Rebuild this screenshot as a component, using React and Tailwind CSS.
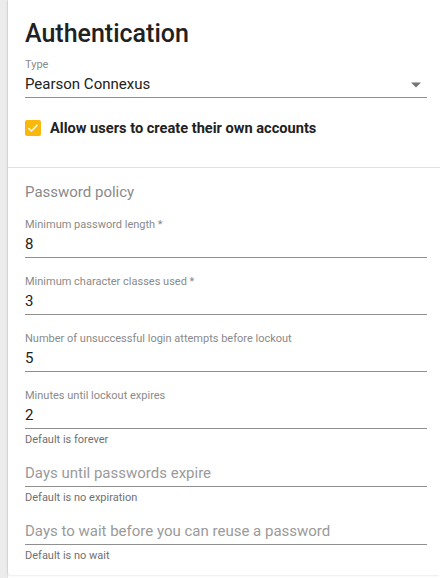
import React from "react";

function Field({ label, value, placeholder, helper, first }) {
  return (
    <div className={first ? "mt-[16px]" : ""}>
      {label && (
        <div className="text-[11px] leading-[14px] text-[#8a8a8a]">{label}</div>
      )}
      <div
        className={
          (label ? "mt-[2px] " : "mt-[16px] ") +
          "h-[24px] border-b border-[#8f8f8f] text-[15px] leading-[20px]"
        }
      >
        {value ? (
          <span className="text-[#212121]">{value}</span>
        ) : (
          <span className="text-[#9a9a9a]">{placeholder}</span>
        )}
      </div>
      {helper && (
        <div className="mt-[4px] text-[11px] leading-[14px] text-[#707070]">{helper}</div>
      )}
    </div>
  );
}

export default function App() {
  return (
    <div
      className="flex h-[578px] w-[440px] bg-white"
      style={{ fontFamily: "Roboto, 'Noto Sans', sans-serif" }}
    >
      <div className="w-[8px] shrink-0 bg-[#ececec] border-r border-[#e2e2e2]" />
      <div className="flex h-[575px] flex-1 flex-col rounded-bl-[4px] bg-white shadow-[-1px_1px_2px_rgba(0,0,0,0.08)]">
        <div className="pl-[17px] pr-[13px] pt-[18px]">
          <h1 className="text-[25px] font-medium leading-[32px] text-[#212121]">
            Authentication
          </h1>
          <div className="mt-[8px] text-[11px] leading-[14px] text-[#8a8a8a]">Type</div>
          <div className="mt-[2px] flex h-[24px] items-start justify-between border-b border-[#8f8f8f]">
            <span className="text-[15px] leading-[20px] text-[#212121]">Pearson Connexus</span>
            <svg width="10" height="6" viewBox="0 0 10 5" className="mr-[6px] mt-[8px]">
              <path d="M0 0 L10 0 L5 5 Z" fill="#757575" />
            </svg>
          </div>
          <div className="mt-[22px] flex items-center gap-[9px]">
            <div className="flex h-[16px] w-[16px] items-center justify-center rounded-[2px] bg-[#f8b90c]">
              <svg width="12" height="10" viewBox="0 0 12 10">
                <path
                  d="M1.5 5.2 L4.5 8 L10.5 1.8"
                  fill="none"
                  stroke="white"
                  strokeWidth="1.4"
                />
              </svg>
            </div>
            <span className="text-[14.6px] font-bold leading-[16px] text-[#212121]">
              Allow users to create their own accounts
            </span>
          </div>
        </div>
        <div className="mt-[31px] h-px bg-[#e2e2e2]" />
        <div className="pl-[17px] pr-[13px]">
          <div className="mt-[14px] text-[15px] leading-[20px] text-[#8a8a8a]">
            Password policy
          </div>
          <Field first label="Minimum password length *" value="8" />
          <div className="mt-[17px]">
            <Field label="Minimum character classes used *" value="3" />
          </div>
          <div className="mt-[17px]">
            <Field label="Number of unsuccessful login attempts before lockout" value="5" />
          </div>
          <div className="mt-[17px]">
            <Field label="Minutes until lockout expires" value="2" helper="Default is forever" />
          </div>
          <Field placeholder="Days until passwords expire" helper="Default is no expiration" />
          <Field
            placeholder="Days to wait before you can reuse a password"
            helper="Default is no wait"
          />
        </div>
      </div>
    </div>
  );
}
